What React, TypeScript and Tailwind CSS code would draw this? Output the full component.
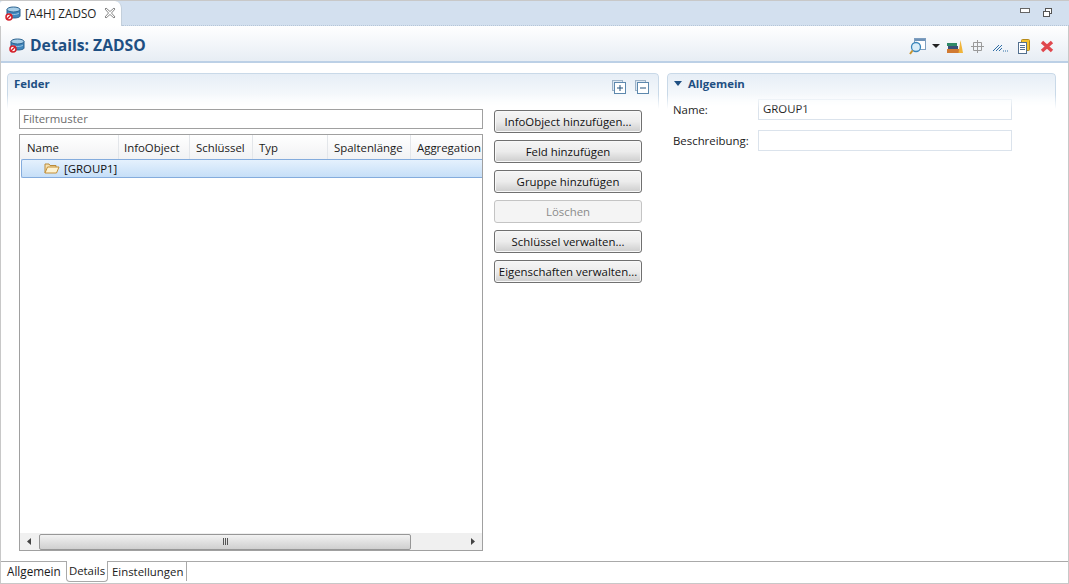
import { ReactNode } from "react"

const columns = [
  { label: "Name", width: "w-[99px] pl-[7px]" },
  { label: "InfoObject", width: "w-[71px] pl-[5px]" },
  { label: "Schlüssel", width: "w-[63px] pl-[6px]" },
  { label: "Typ", width: "w-[75px] pl-[6px]" },
  { label: "Spaltenlänge", width: "w-[83px] pl-[6px]" },
  { label: "Aggregation", width: "w-[71px] pl-[6px]" },
]

const actions = [
  { label: "InfoObject hinzufügen..." },
  { label: "Feld hinzufügen" },
  { label: "Gruppe hinzufügen" },
  { label: "Löschen", disabled: true },
  { label: "Schlüssel verwalten..." },
  { label: "Eigenschaften verwalten..." },
]

function DataSourceIcon() {
  return (
    <svg width="17" height="16" viewBox="0 0 17 16" className="shrink-0">
      <path d="M2 4.500v6.500c0 1.200 2.700 2 6.500 2s6.500-.8 6.500-2V4.500z" fill="#3f86bd" stroke="#2b6390" />
      <ellipse cx="8.500" cy="4.500" rx="6.500" ry="2.500" fill="#a9cfe8" stroke="#2b6390" />
      <path d="M3 8c1 1 3 1.500 5.500 1.500S13 9 14 8" fill="none" stroke="#9cc6e2" />
      <circle cx="4" cy="12" r="3" fill="#fff" stroke="#d5202a" strokeWidth="1.500" />
      <path d="M2 14l4-4" stroke="#d5202a" strokeWidth="1.500" />
    </svg>
  )
}

function FolderIcon() {
  return (
    <svg width="16" height="14" viewBox="0 0 16 14">
      <path d="M1 12V3h4l1 1.500h6V6" fill="#f6e3b4" stroke="#b98a3a" />
      <path d="M1 12l2.500-6h11.500L12.500 12z" fill="#fdf3d3" stroke="#c48f35" />
    </svg>
  )
}

function TreeToggle({ minus }: { minus?: boolean }) {
  return (
    <svg width="14" height="14" viewBox="0 0 14 14">
      <rect x="0.500" y="0.500" width="10" height="10" fill="#dce7f2" stroke="#9db3c8" />
      <rect x="2.500" y="2.500" width="11" height="11" fill="#fff" stroke="#5d88ad" />
      <path d={minus ? "M5 8h6" : "M5 8h6M8 5v6"} stroke="#24527c" />
    </svg>
  )
}

function HeaderTools() {
  return (
    <div className="flex items-center pt-[5px]">
      <svg width="17" height="17" viewBox="0 0 17 17" className="mr-[6px]">
        <rect x="5.500" y="0.500" width="11" height="11" fill="#fff" stroke="#7f9fc0" />
        <path d="M6 1h10v2H6z" fill="#6f93b8" />
        <circle cx="7" cy="9" r="4.500" fill="#d9edf9" stroke="#3a86bb" strokeWidth="1.300" />
        <path d="M3.500 12.500L1 16" stroke="#c9952f" strokeWidth="2" />
      </svg>
      <svg width="8" height="4" viewBox="0 0 8 4" className="mr-[7px]">
        <path d="M0 0h8L4 4z" fill="#222" />
      </svg>
      <svg width="16" height="13" viewBox="0 0 16 13" className="mr-[8px]">
        <rect x="0" y="3" width="10" height="3" fill="#2f8a68" />
        <rect x="1" y="6" width="10" height="3" fill="#3a4f78" />
        <rect x="0" y="9" width="12" height="4" fill="#d17a32" />
        <path d="M11.500 13l2-13 2.500 13z" fill="#f0b43a" />
      </svg>
      <svg width="13" height="13" viewBox="0 0 13 13" className="mr-[9px]">
        <path d="M2.500 2.500h8v8h-8zM6.500 0v13M0 6.500h13" fill="none" stroke="#9a9a9a" />
      </svg>
      <svg width="16" height="10" viewBox="0 0 16 10" className="mr-[9px] mt-[2px]">
        <path d="M0 9l6-6M3 9l6-6M6 9l3-3" stroke="#2f6ea6" />
        <path d="M10 9h1M12 9h1M14 9h1" stroke="#2f6ea6" />
      </svg>
      <svg width="12" height="15" viewBox="0 0 12 15" className="mr-[10px]">
        <rect x="3.500" y="0.500" width="8" height="11" rx="1" fill="#f2c230" stroke="#b68a1a" />
        <rect x="0.500" y="3.500" width="8" height="11" fill="#fff" stroke="#53708f" />
        <path d="M2 6.500h5M2 8.500h5M2 10.500h5" stroke="#53708f" />
      </svg>
      <svg width="14" height="13" viewBox="0 0 14 13">
        <path d="M2 2l10 9M12 2L2 11" stroke="#e0484e" strokeWidth="3.400" />
      </svg>
    </div>
  )
}

function Section({ title, right, className, children }: { title: ReactNode; right?: ReactNode; className: string; children: ReactNode }) {
  return (
    <section className={`relative ${className}`}>
      <div className="h-[36px] rounded-t-[4px] border-x border-t border-[#c9d9e8] bg-gradient-to-b from-[#e6eef6] to-white [mask-image:linear-gradient(to_bottom,black_60%,transparent)]" />
      <div className="absolute inset-x-0 top-0 flex h-[20px] items-center justify-between pl-[7px] pr-[10px] text-[11.400px] font-bold text-[#1e4f82]">
        {title}
        {right}
      </div>
      {children}
    </section>
  )
}

function ActionButton({ label, disabled }: { label: string; disabled?: boolean }) {
  return (
    <button
      disabled={disabled}
      className={
        disabled
          ? "h-[23px] w-[148px] rounded-[3px] border border-[#c4c4c4] bg-[#f4f4f4] pb-[1px] text-[#8b8b8b]"
          : "h-[23px] w-[148px] rounded-[3px] border border-[#707070] bg-gradient-to-b from-[#f5f5f5] via-[#ececec] to-[#cdcdcd] pb-[1px] text-[#111] shadow-[inset_0_0_0_1px_#f8f8f8]"
      }
    >
      {label}
    </button>
  )
}

function FieldTree() {
  return (
    <div className="flex h-[417px] w-[464px] flex-col overflow-hidden border border-[#a0a0a0]">
      <div className="flex h-[24px] shrink-0 bg-gradient-to-b from-white to-[#f1f2f4]">
        {columns.map((c) => (
          <div key={c.label} className={`${c.width} shrink-0 whitespace-nowrap border-r border-[#e3e6ea] pt-[5px] text-[#1a1a1a] last:border-r-0`}>
            {c.label}
          </div>
        ))}
      </div>
      <div className="ml-[1px] flex h-[19px] shrink-0 items-center rounded-l-[2px] border-y border-l border-[#84acdd] bg-gradient-to-b from-[#e5f1fd] to-[#c6dff8] pb-[1px] pl-[22px] text-[#111]">
        <FolderIcon />
        <span className="ml-[4px]">[GROUP1]</span>
      </div>
      <div className="flex-1" />
      <div className="flex h-[17px] shrink-0 items-center bg-[#f0f0f0]">
        <div className="flex w-[19px] justify-center">
          <svg width="5" height="7" viewBox="0 0 5 7"><path d="M4 0v7L0 3.500z" fill="#444" /></svg>
        </div>
        <div className="flex h-[16px] w-[372px] items-center justify-center gap-[1px] rounded-[2px] border border-[#979797] bg-gradient-to-b from-[#f2f2f2] to-[#cfcfcf]">
          <div className="h-[7px] w-[1px] bg-[#555]" />
          <div className="h-[7px] w-[1px] bg-[#555]" />
          <div className="h-[7px] w-[1px] bg-[#555]" />
        </div>
        <div className="flex flex-1 justify-end pr-[7px]">
          <svg width="5" height="7" viewBox="0 0 5 7"><path d="M1 0v7l4-3.500z" fill="#444" /></svg>
        </div>
      </div>
    </div>
  )
}

export default function App() {
  return (
    <div className="flex h-[584px] w-[1069px] flex-col overflow-hidden bg-white font-['Open_Sans','Noto_Sans',sans-serif] text-[11.400px] leading-[15px] text-[#1a1a1a]">
      <div className="flex h-[26px] shrink-0 border-t border-[#c8c8c8] bg-[#d3e0ef]">
        <div className="flex w-[122px] items-center rounded-tr-[7px] rounded-tl-[3px] border-r border-[#c3cfdb] bg-white pb-[1px] pl-[5px]">
          <DataSourceIcon />
          <span className="ml-[3px] whitespace-nowrap text-[11.700px] text-[#222]">[A4H] ZADSO</span>
          <svg width="12" height="12" viewBox="0 0 12 12" className="ml-[8px]">
            <path d="M2 1l4 3.500L10 1l1 1-3.500 4L11 10l-1 1-4-3.500L2 11l-1-1 3.500-4L1 2z" fill="#fff" stroke="#888" />
          </svg>
        </div>
        <div className="flex-1 border-b border-dotted border-[#b6c6d8]" />
        <div className="flex items-start gap-[13px] border-b border-dotted border-[#b6c6d8] pr-[17px] pt-[7px]">
          <div className="h-[5px] w-[10px] border border-[#666] bg-white" />
          <svg width="9" height="9" viewBox="0 0 9 9">
            <rect x="2.500" y="0.500" width="6" height="5" fill="#fff" stroke="#555" />
            <rect x="0.500" y="3.500" width="6" height="5" fill="#fff" stroke="#555" />
          </svg>
        </div>
      </div>

      <div className="flex min-h-0 flex-1 flex-col border-x border-[#c8c8c8]">
        <header className="flex h-[37px] shrink-0 items-center justify-between border-b-2 border-[#bcd0e6] bg-gradient-to-b from-white to-[#e7edf4] pl-[8px] pr-[14px]">
          <div className="flex items-center gap-[4px] pt-[3px]">
            <DataSourceIcon />
            <h1 className="text-[15.700px] font-bold text-[#1e4f82]">Details: ZADSO</h1>
          </div>
          <HeaderTools />
        </header>

        <main className="flex flex-1 gap-[8px] pl-[6px] pt-[10px]">
          <Section
            className="w-[652px]"
            title="Felder"
            right={
              <div className="flex gap-[9px] pt-[8px]">
                <TreeToggle />
                <TreeToggle minus />
              </div>
            }
          >
            <div className="flex gap-[11px] pl-[12px]">
              <div className="flex flex-col gap-[5px]">
                <input
                  readOnly
                  placeholder="Filtermuster"
                  className="h-[20px] w-[464px] border border-[#a0a0a0] px-[3px] pb-[2px] placeholder:text-[#6d6d6d]"
                />
                <FieldTree />
              </div>
              <div className="flex flex-col gap-[7px] pt-[1px]">
                {actions.map((a) => (
                  <ActionButton key={a.label} label={a.label} disabled={a.disabled} />
                ))}
              </div>
            </div>
          </Section>

          <Section
            className="w-[389px]"
            title={
              <span className="flex items-center gap-[6px]">
                <svg width="8" height="5" viewBox="0 0 8 5"><path d="M0 0h8L4 5z" fill="#1e4f82" /></svg>
                Allgemein
              </span>
            }
          >
            <div className="-mt-[10px] grid grid-cols-[85px_254px] items-center gap-y-[10px] pl-[6px]">
              <label className="pb-[1px]">Name:</label>
              <input readOnly value="GROUP1" className="h-[21px] border border-[#dbe3ec] px-[4px] pb-[2px]" />
              <label>Beschreibung:</label>
              <input readOnly className="h-[21px] border border-[#dbe3ec] px-[4px]" />
            </div>
          </Section>
        </main>

        <footer className="flex h-[22px] shrink-0 border-t border-[#a9a9a9] bg-white">
          <div className="flex h-[19px] w-[65px] items-center pl-[6px] text-[11.700px]">Allgemein</div>
          <div className="-mt-[1px] flex h-[21px] w-[42px] items-center justify-center rounded-b-[4px] border-x border-b border-[#a9a9a9] bg-white pb-[1px]">Details</div>
          <div className="flex h-[19px] items-center border-r border-[#a9a9a9] pl-[4px] pr-[3px]">Einstellungen</div>
        </footer>
      </div>
      <div className="h-px shrink-0 bg-[#c8c8c8]" />
    </div>
  )
}
